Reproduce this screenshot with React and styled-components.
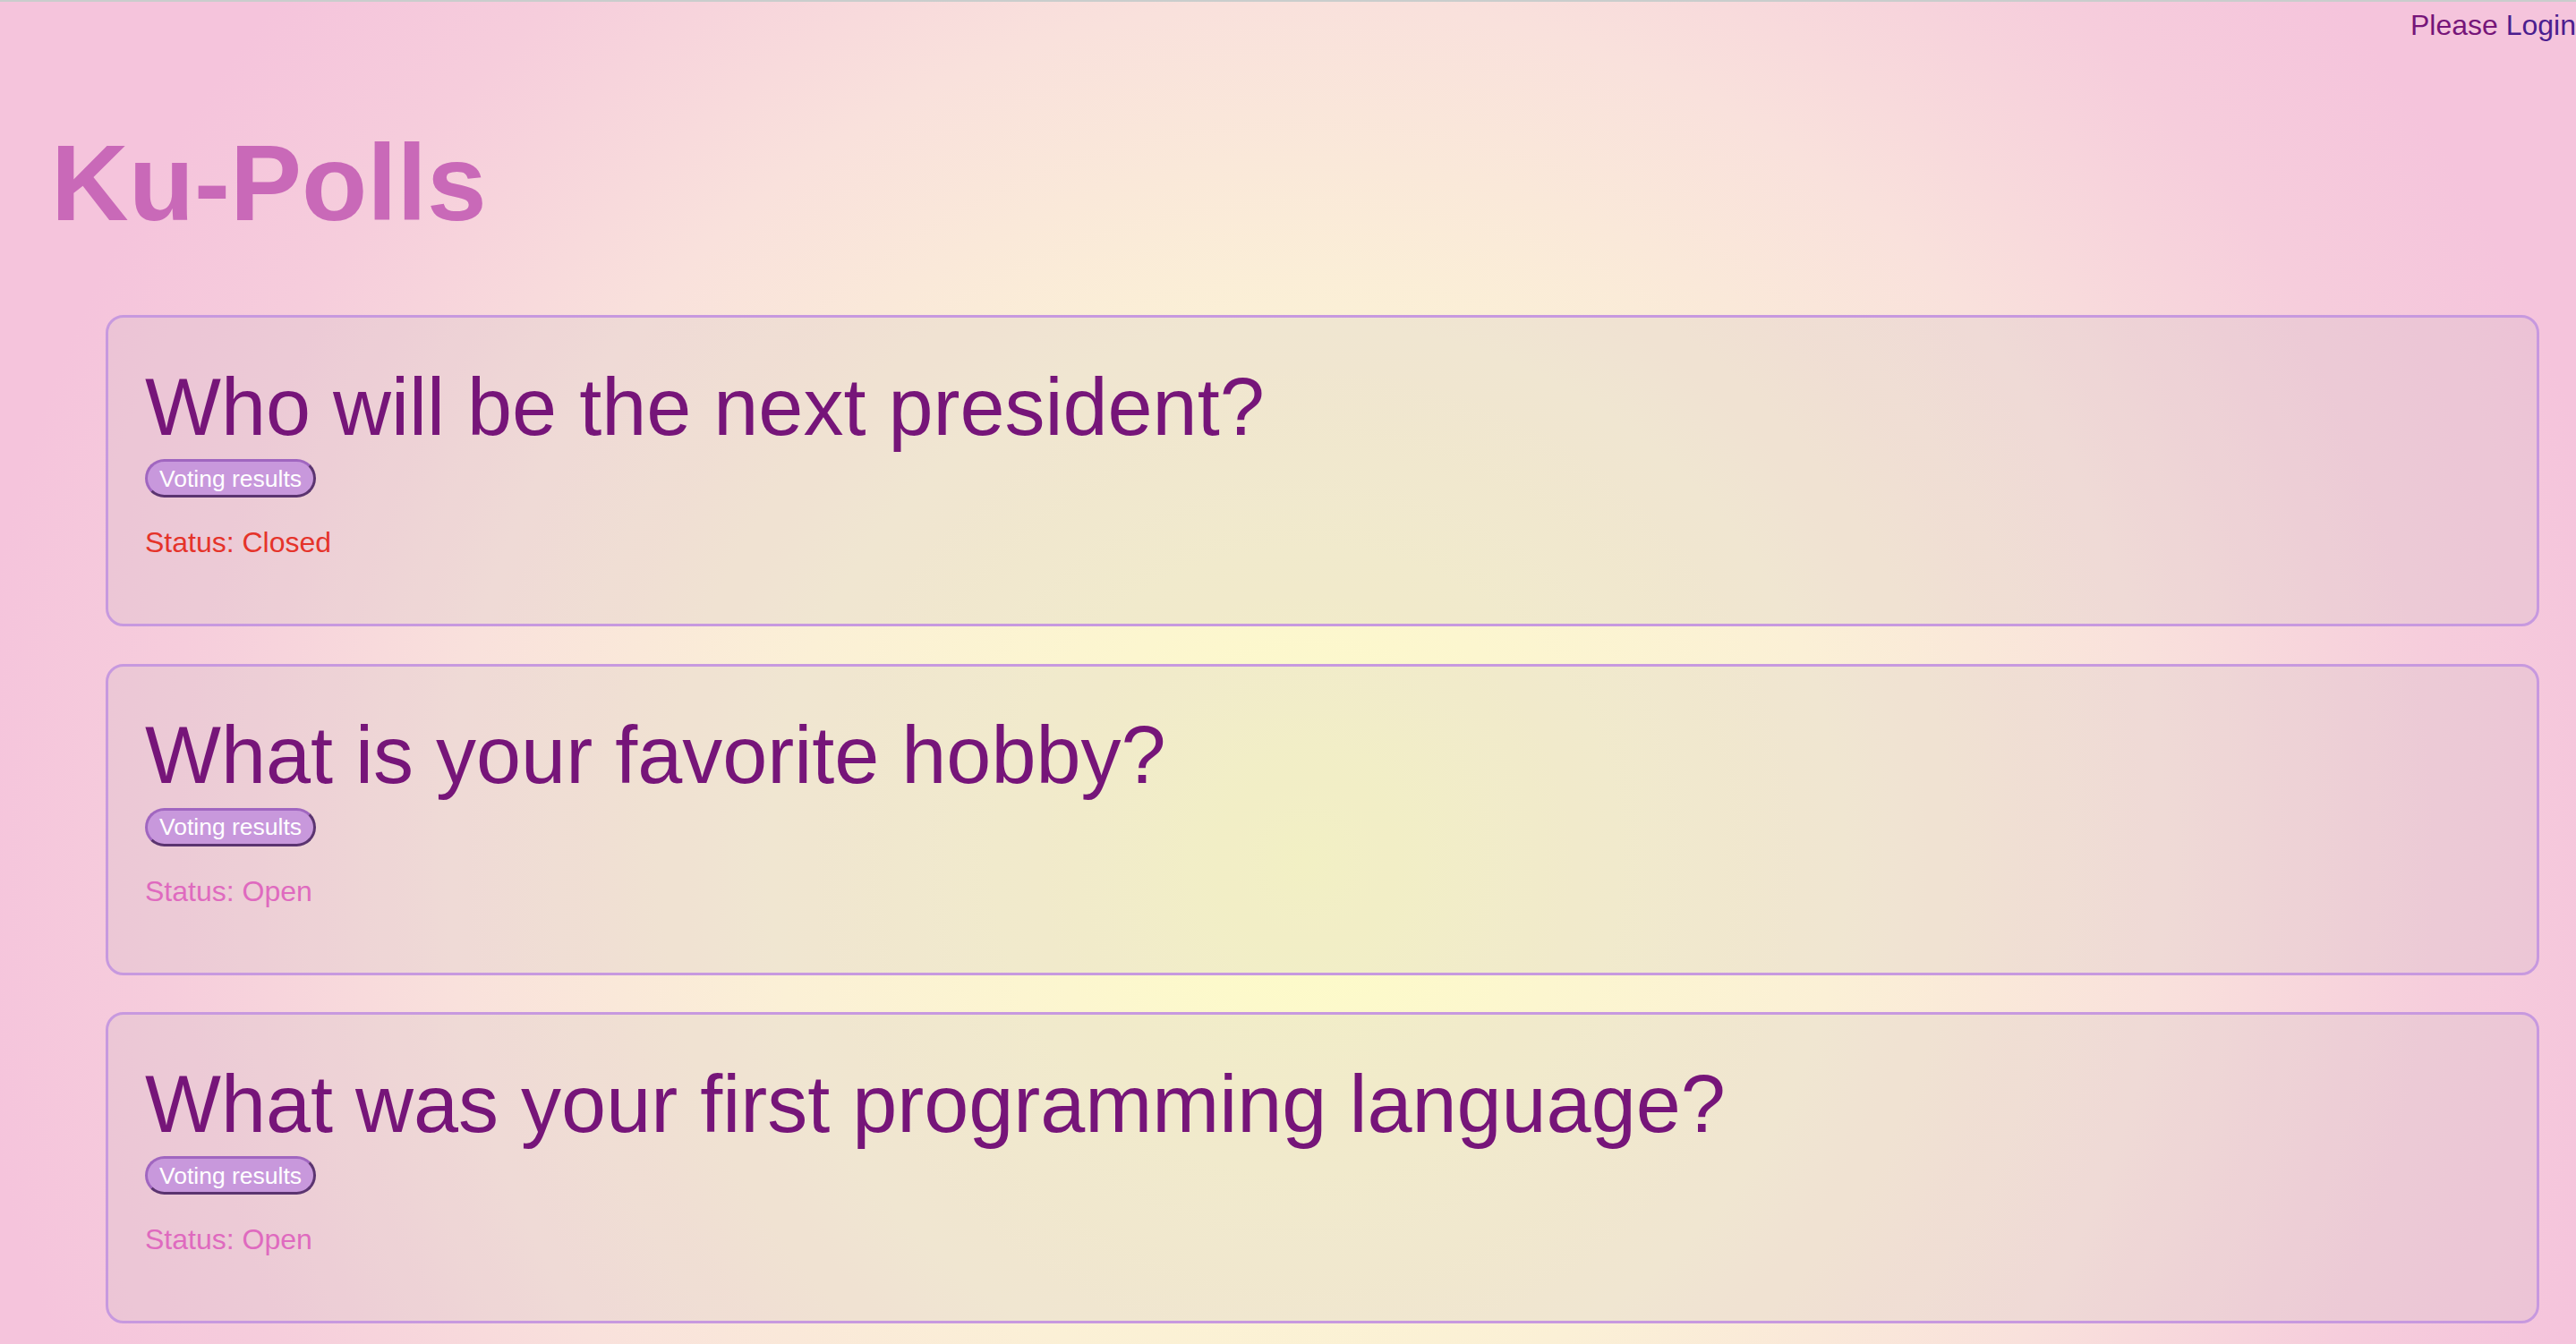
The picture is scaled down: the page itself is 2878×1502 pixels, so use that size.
import React from 'react';
import styled, { createGlobalStyle } from 'styled-components';

const GlobalStyle = createGlobalStyle`
  html, body {
    margin: 0;
    padding: 0;
    min-height: 100%;
  }
  body {
    font-family: 'Liberation Sans', Arial, Helvetica, sans-serif;
    background-color: #f5c5dc;
  }
`;

const Page = styled.div`
  min-height: 100vh;
  box-sizing: border-box;
  border-top: 2px solid #c9cdcc;
  padding-bottom: 24px;
  background: radial-gradient(
    circle 1500px at 1460px 960px,
    #fdfdc6 0%,
    #fcf6cf 20%,
    #fbf0d6 40%,
    #f9e1dc 64%,
    #f6cddc 85%,
    #f5c4dc 100%
  );
`;

const TopBar = styled.div`
  padding-top: 8px;
  text-align: right;
  font-size: 32px;
  line-height: 37px;
  color: #761579;
  white-space: nowrap;
`;

const LoginLink = styled.a`
  color: #4b1e8f;
  text-decoration: none;
`;

const Title = styled.h1`
  margin: 88px 0 0;
  padding-left: 57px;
  font-size: 120px;
  line-height: 138px;
  font-weight: 700;
  color: #c969b8;
`;

const PollList = styled.ul`
  list-style: none;
  margin: 79px 0 0;
  padding: 0 41px 0 118px;
  display: flex;
  flex-direction: column;
  gap: 41.5px;
`;

const Card = styled.li`
  box-sizing: border-box;
  height: 348px;
  padding: 48.5px 41px 0;
  border: 3px solid #c799df;
  border-radius: 20px;
  background: rgba(200, 188, 192, 0.2);
`;

const Question = styled.h2`
  margin: 0;
  font-size: 90px;
  line-height: 103.5px;
  font-weight: 400;
  color: #761579;
  white-space: nowrap;
`;

const ResultsButton = styled.button`
  display: inline-block;
  margin-top: 6px;
  padding: 3.5px 13px;
  font-family: inherit;
  font-size: 26.5px;
  line-height: 30px;
  color: #ffffff;
  background: #c898dc;
  border: 3px solid;
  border-color: #a066c0 #5b3470 #5b3470 #a066c0;
  border-radius: 999px;
  cursor: pointer;
`;

const Status = styled.p`
  margin: 32px 0 0;
  font-size: 32px;
  line-height: 37px;
  color: ${(p) => (p.closed ? '#e5332a' : '#df6abf')};
`;

const polls = [
  { question: 'Who will be the next president?', closed: true },
  { question: 'What is your favorite hobby?', closed: false },
  { question: 'What was your first programming language?', closed: false },
];

export default function App() {
  return (
    <>
      <GlobalStyle />
      <Page>
        <TopBar>
          Please <LoginLink href="#">Login</LoginLink>
        </TopBar>
        <Title>Ku-Polls</Title>
        <PollList>
          {polls.map((poll) => (
            <Card key={poll.question}>
              <Question>{poll.question}</Question>
              <ResultsButton>Voting results</ResultsButton>
              <Status closed={poll.closed}>
                Status: {poll.closed ? 'Closed' : 'Open'}
              </Status>
            </Card>
          ))}
        </PollList>
      </Page>
    </>
  );
}
